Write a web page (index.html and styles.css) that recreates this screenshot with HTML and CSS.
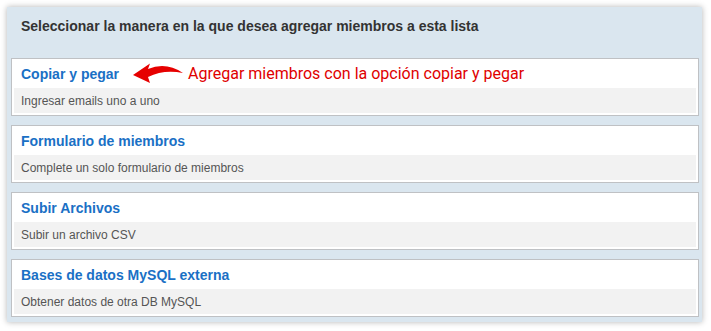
FILE: index.html
```html
<!DOCTYPE html>
<html lang="es">
<head>
  <meta charset="UTF-8">
  <title>Agregar miembros</title>
  <link rel="stylesheet" href="styles.css">
</head>
<body>

<div class="panel">
  <div class="panel-title">Seleccionar la manera en la que desea agregar miembros a esta lista</div>

  <div class="option">
    <div class="option-head">
      <a href="#">Copiar y pegar</a>
      <svg class="arrow" width="50" height="20" viewBox="0 0 50 20">
        <path d="M0 12 L17 0.5 L15 6 Q33 -1.5 50 10 Q31 6 15 14 L17 20 Z" fill="#e60000"/>
      </svg>
      <span class="note">Agregar miembros con la opción copiar y pegar</span>
    </div>
    <div class="option-desc">Ingresar emails uno a uno</div>
  </div>

  <div class="option">
    <div class="option-head"><a href="#">Formulario de miembros</a></div>
    <div class="option-desc">Complete un solo formulario de miembros</div>
  </div>

  <div class="option">
    <div class="option-head"><a href="#">Subir Archivos</a></div>
    <div class="option-desc">Subir un archivo CSV</div>
  </div>

  <div class="option">
    <div class="option-head"><a href="#">Bases de datos MySQL externa</a></div>
    <div class="option-desc">Obtener datos de otra DB MySQL</div>
  </div>
</div>

</body>
</html>
```

FILE: styles.css
```css
body {
  margin: 0;
  background: #fff;
  font-family: "Liberation Sans", Arial, sans-serif;
}
.panel {
  margin: 7px 9px 9px 7px;
  background: #dae6ef;
  box-shadow: 0 0 6px rgba(0,0,0,0.3);
  padding: 0 3px 5px 4px;
  display: flex;
  flex-direction: column;
  gap: 9px;
}
.panel-title {
  padding: 10px 0 0 10px;
  height: 18px;
  line-height: 18px;
  margin-bottom: 14px;
  font-size: 14px;
  font-weight: bold;
  color: #333;
}
.option {
  background: #fff;
  border: 1px solid #bfc1c4;
  padding: 0 2px 2px;
}
.option-head {
  height: 29px;
  display: flex;
  align-items: center;
  padding-left: 7px;
}
.option-head a {
  font-size: 14px;
  font-weight: bold;
  color: #1a70c5;
  text-decoration: none;
}
.arrow {
  margin-left: 14px;
  margin-top: -2px;
}
.note {
  margin-left: 5px;
  font-family: Roboto, "Liberation Sans", sans-serif;
  font-size: 16px;
  color: #e00000;
}
.option-desc {
  height: 25px;
  line-height: 26px;
  padding-left: 7px;
  background: #f2f2f2;
  font-size: 12px;
  color: #555;
}
```
